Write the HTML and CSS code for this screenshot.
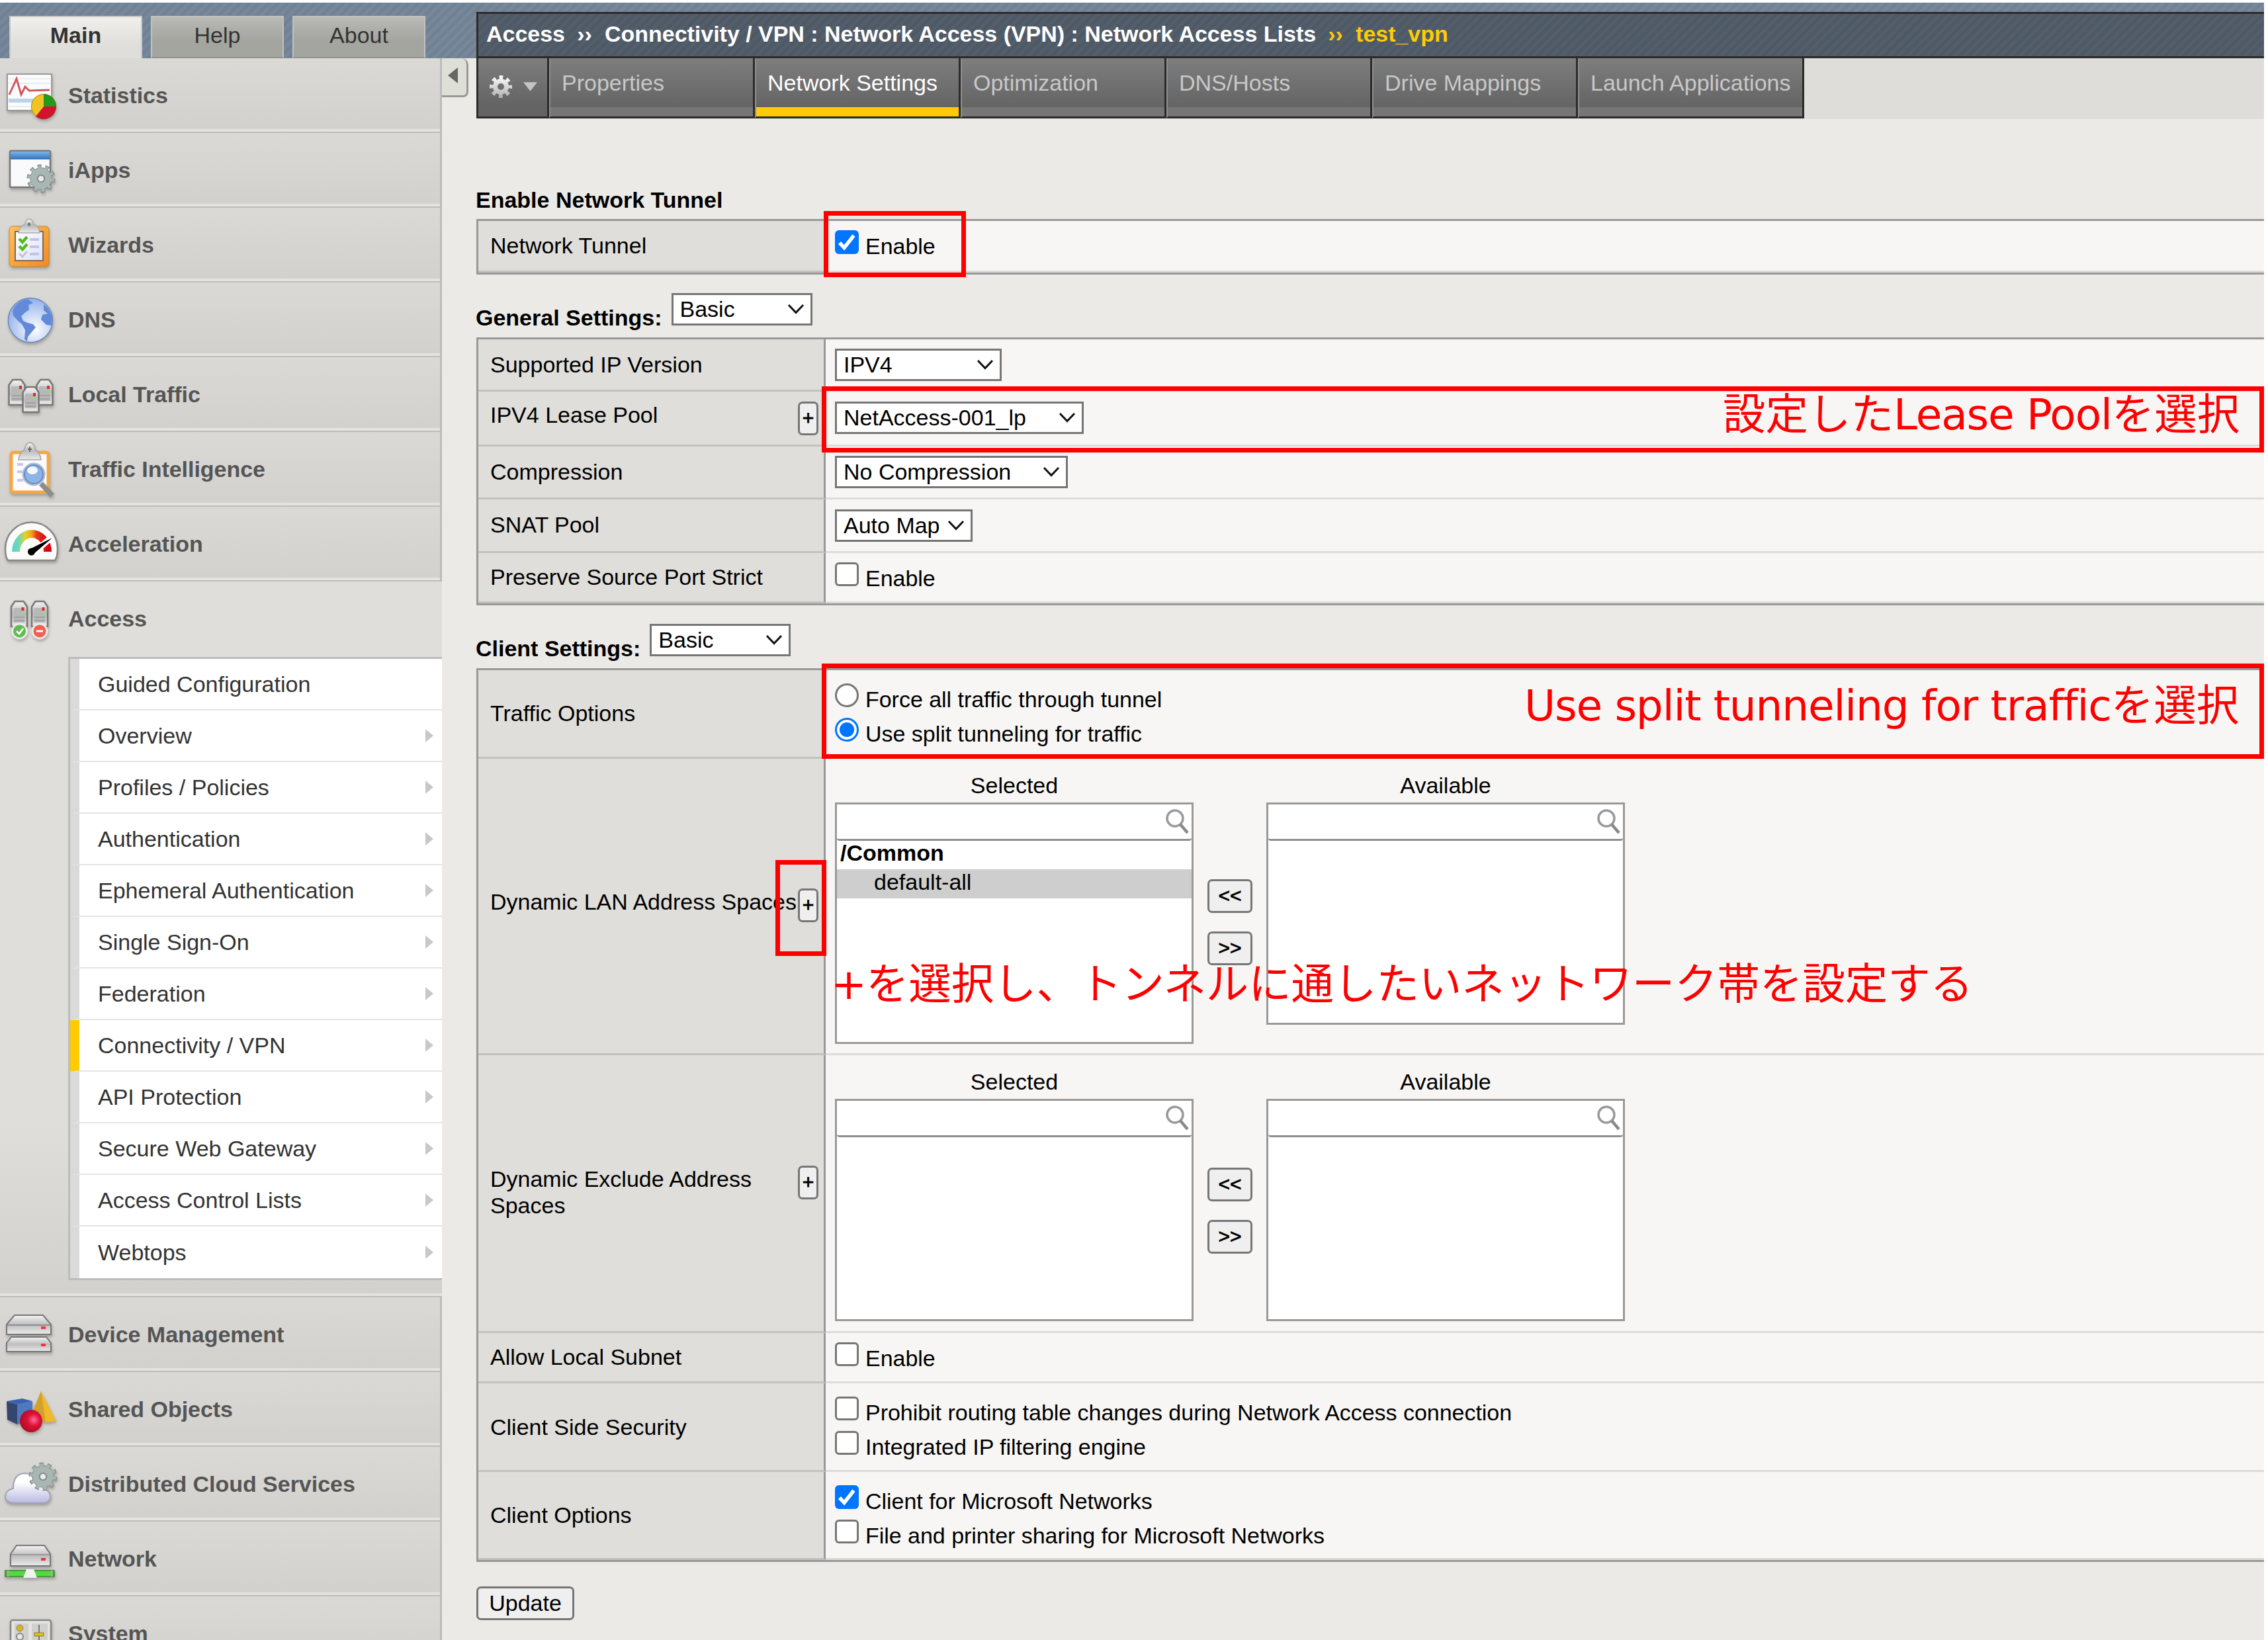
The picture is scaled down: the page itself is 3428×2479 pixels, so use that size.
FILE: index.html
```html
<!DOCTYPE html>
<html lang="en">
<head>
<meta charset="utf-8">
<title>Network Access Lists</title>
<link rel="stylesheet" href="styles.css">
</head>
<body>
<svg class="defs" width="0" height="0" aria-hidden="true">
  <defs>
    <linearGradient id="metal" x1="0" y1="0" x2="0" y2="1"><stop offset="0" stop-color="#f4f4f4"/><stop offset=".5" stop-color="#bdbdbd"/><stop offset="1" stop-color="#ececec"/></linearGradient>
    <linearGradient id="orange" x1="0" y1="0" x2="1" y2="1"><stop offset="0" stop-color="#ffc25c"/><stop offset="1" stop-color="#f08a22"/></linearGradient>
    <linearGradient id="blue" x1="0" y1="0" x2="0" y2="1"><stop offset="0" stop-color="#7db4ec"/><stop offset="1" stop-color="#3372b8"/></linearGradient>
    <linearGradient id="paper" x1="0" y1="0" x2="1" y2="1"><stop offset="0" stop-color="#fff"/><stop offset="1" stop-color="#dfe0fa"/></linearGradient>
    <radialGradient id="globe" cx=".6" cy=".7" r=".7"><stop offset="0" stop-color="#fff"/><stop offset="1" stop-color="#8fb0ea"/></radialGradient>
    <radialGradient id="ball" cx=".62" cy=".45" r=".55"><stop offset="0" stop-color="#ff6a98"/><stop offset=".5" stop-color="#dc1236"/><stop offset="1" stop-color="#b80c26"/></radialGradient>
    <linearGradient id="cloud" x1="0" y1="0" x2="0" y2="1"><stop offset=".3" stop-color="#fff"/><stop offset="1" stop-color="#b9b9e2"/></linearGradient>
    <linearGradient id="arc" x1="0" y1="0" x2="1" y2="0"><stop offset="0" stop-color="#5fd6cc"/><stop offset=".12" stop-color="#7fd6a0"/><stop offset=".3" stop-color="#e8d024"/><stop offset=".5" stop-color="#f0a020"/><stop offset=".65" stop-color="#e63a1a"/><stop offset="1" stop-color="#de0010"/></linearGradient>
    <linearGradient id="shine" gradientUnits="userSpaceOnUse" x1="0" y1="-17" x2="0" y2="17"><stop offset="0" stop-color="#fff"/><stop offset="1" stop-color="#b0b0b0"/></linearGradient>
    <g id="tower">
      <path d="M1.500 10 L7 2 H20 L25.500 10 V40 H1.500 Z" fill="url(#metal)" stroke="#777" stroke-width="2.500" stroke-linejoin="round"/>
      <path d="M5 12 H22 V34 H5 Z" fill="#b8b8b8"/><path d="M5 26 H22 M5 31 H22" stroke="#999" stroke-width="1.500"/>
      <path d="M17 11h4v5h-4z" fill="#e02838"/><path d="M17 17h4v4h-4z" fill="#8fe06a"/>
    </g>
    <g id="cog">
      <circle r="18" fill="none" stroke="#7f8b89" stroke-width="7" stroke-dasharray="5.650 5.660"/>
      <circle r="11" fill="none" stroke="#7f8b89" stroke-width="11.500"/>
      <circle r="17" fill="none" stroke="#a9b7b4" stroke-width="6" stroke-dasharray="4 6.680" stroke-dashoffset="-.4"/>
      <circle r="11" fill="none" stroke="#a9b7b4" stroke-width="9.500"/>
      <circle r="5" fill="#e9eceb" stroke="#7f8b89" stroke-width="1.500"/>
    </g>
    <g id="glass"><circle cx="14" cy="14" r="12" fill="none" stroke="#999" stroke-width="3.500"/><path d="M22 23 L33 36" stroke="#8a8a8a" stroke-width="4.500"/></g>
  </defs>
</svg>

<div class="page">
  <aside class="side">
    <div class="side-tabs"><span class="side-tab on">Main</span><span class="side-tab">Help</span><span class="side-tab">About</span></div>
    <div class="side-body">
      <nav class="menu">
        <div class="item"><svg class="icon" viewBox="0 0 100 113"><rect x="11" y="24" width="67" height="55" fill="#fbfcfd" stroke="#999" stroke-width="2"/><path d="M13 64h50" stroke="#bcd3e8" stroke-width="6"/><path d="M13 31h63M13 38h63M13 73h40" stroke="#e9eef2" stroke-width="2"/><path d="M14 55 L25 31 L32 55 L38 43 L44 49 L75 48" fill="none" stroke="#d5565c" stroke-width="3"/><circle cx="66" cy="73" r="19" fill="#f2c422"/><path d="M66 73V54A19 19 0 0 1 85 73Z" fill="#239a1c"/><path d="M66 73H85A19 19 0 0 1 54 88Z" fill="#d3122e"/><circle cx="66" cy="73" r="18.500" fill="none" stroke="#5a4b1a" stroke-opacity=".5"/></svg>Statistics</div>
        <div class="item"><svg class="icon" viewBox="0 0 100 113"><rect x="15" y="27" width="61" height="55" rx="2" fill="#fafafc" stroke="#777" stroke-width="2.500"/><path d="M16 28h59v12H16z" fill="url(#blue)"/><use href="#cog" x="62" y="69"/></svg>iApps</div>
        <div class="item"><svg class="icon" viewBox="0 0 100 113"><rect x="14" y="28" width="60" height="61" rx="5" fill="url(#orange)" stroke="#c9842e"/><rect x="23" y="36" width="42" height="44" fill="url(#paper)" stroke="#7a6a5a" stroke-width="2"/><path d="M28 38 Q29 27 38 25 Q39 17 44 17 Q49 17 50 25 Q59 27 60 38 Z" fill="url(#metal)" stroke="#aaa" stroke-width="1.500"/><circle cx="44" cy="25" r="2.500" fill="#777"/><path d="M29 47l5 5 7-8M29 58l5 5 7-8" fill="none" stroke="#52bd1c" stroke-width="4.500"/><path d="M29 69l5 5 7-8" fill="none" stroke="#c4c4cc" stroke-width="3"/><path d="M45 48h14M45 59h14M45 70h14" stroke="#c0c4e6" stroke-width="4"/></svg>Wizards</div>
        <div class="item"><svg class="icon" viewBox="0 0 100 113"><circle cx="46" cy="57" r="33.500" fill="url(#globe)" stroke="#6b87bd" stroke-width="1.500"/><path d="M22 37 Q29 27 42 25 L50 31 43 34 44 41 37 46 32 51 35 58 42 61 50 63 54 68 47 76 42 82 41 89 37 86 38 72 33 63 27 58 20 50 19 43Z" fill="#628ad8"/><path d="M66 33 L73 39 79 52 78 65 70 64 62 56 64 49 72 47 66 42Z" fill="#628ad8"/></svg>DNS</div>
        <div class="item"><svg class="icon" viewBox="0 0 100 113"><use href="#tower" x="12" y="32"/><use href="#tower" x="54" y="32"/><use href="#tower" x="33" y="43"/></svg>Local Traffic</div>
        <div class="item"><svg class="icon" viewBox="0 0 100 113"><rect x="17" y="31" width="56" height="60" rx="3" fill="#fafaff" stroke="#f5a646" stroke-width="5"/><path d="M28 42 Q29 31 37 27 Q39 16 45 16 Q51 16 53 27 Q61 31 62 42 Z" fill="url(#metal)" stroke="#a5a5a5" stroke-width="1.500"/><path d="M45 22v8M42 26h6" stroke="#666" stroke-width="2"/><path d="M26 49h9M26 60h8M26 73h9" stroke="#c3c8e8" stroke-width="4"/><path d="M62 78 L79 96" stroke="#8a8f8c" stroke-width="8"/><circle cx="51" cy="64" r="15.500" fill="#8fb3e6" stroke="#b4bcc4" stroke-width="4"/><circle cx="51" cy="64" r="14" fill="none" stroke="#5f8ed0" stroke-width="2"/><ellipse cx="49" cy="58" rx="8" ry="6" fill="#f4f9ff"/></svg>Traffic Intelligence</div>
        <div class="item"><svg class="icon" viewBox="0 0 100 113"><path d="M12 81 Q8 76 8 63 A39.500 39.500 0 0 1 87 63 Q87 76 83 81 Z" fill="#fbfbfa" stroke="#888" stroke-width="2.500"/><path d="M24 68 A24 27 0 0 1 72 68" fill="none" stroke="url(#arc)" stroke-width="12"/><path d="M46 74 L78 46" stroke="#fff" stroke-width="9"/><path d="M43 65 L79 47 L50 72 Z" fill="#000"/><circle cx="47.500" cy="68" r="5.500" fill="#000"/></svg>Acceleration</div>
        <div class="item open"><svg class="icon" viewBox="0 0 100 113"><use href="#tower" x="15.500" y="28"/><use href="#tower" x="46.500" y="28"/><circle cx="29.500" cy="75" r="12.500" fill="#e9ece6"/><circle cx="60" cy="75" r="12.500" fill="#efe8e4"/><circle cx="29.500" cy="75" r="9.500" fill="#63bb55"/><circle cx="60" cy="75" r="9.500" fill="#ec6258"/><path d="M25 75l4 4 6-8" fill="none" stroke="#fff" stroke-width="2.500"/><path d="M55 75h10" stroke="#fff" stroke-width="3"/></svg>Access</div>
        <div class="submenu-wrap">
          <ul class="submenu">
            <li class="leaf">Guided Configuration</li><li>Overview</li><li>Profiles / Policies</li><li>Authentication</li><li>Ephemeral Authentication</li><li>Single Sign-On</li><li>Federation</li><li class="current">Connectivity / VPN</li><li>API Protection</li><li>Secure Web Gateway</li><li>Access Control Lists</li><li>Webtops</li>
          </ul>
        </div>
        <div class="item"><svg class="icon" viewBox="0 0 100 113"><path d="M10 69 L17 60 H70 L77 69 V82 H10Z" fill="url(#metal)" stroke="#777" stroke-width="2"/><path d="M10 41 L22 27 H65 L77 41 V56 H10Z" fill="url(#metal)" stroke="#777" stroke-width="2"/><path d="M11 42h65" stroke="#8e8e8e" stroke-width="2"/><path d="M62 44h7v4h-7zM62 70h7v4h-7z" fill="#f0343c"/></svg>Device Management</div>
        <div class="item"><svg class="icon" viewBox="0 0 100 113"><path d="M10 44 L26 49 V79 L11 72Z" fill="#34456e"/><path d="M10 44 L34 40 49 44 26 49Z" fill="#3a62b0"/><path d="M26 49 L49 44 V72 L26 79Z" fill="#4f78c2"/><path d="M62 29 L85 74 69 76 48 65Z" fill="#f0b92a"/><path d="M62 29 L69 76 46 68Z" fill="#d2a02c"/><circle cx="47" cy="74" r="17" fill="url(#ball)"/></svg>Shared Objects</div>
        <div class="item"><svg class="icon" viewBox="0 0 100 113"><path d="M20 85 Q8 84 8 75 Q9 65 20 63 Q20 41 37 40 Q50 40 54 54 Q66 54 66 64 Q76 66 76 75 Q76 84 66 85Z" fill="url(#cloud)" stroke="#a3a3b4" stroke-width="2"/><use href="#cog" x="65" y="45"/></svg>Distributed Cloud Services</div>
        <div class="item"><svg class="icon" viewBox="0 0 100 113"><path d="M16 49 L25 36 H67 L76 49 V67 H16Z" fill="url(#metal)" stroke="#777" stroke-width="2"/><path d="M17 50h58" stroke="#999" stroke-width="2"/><path d="M62 55h7v4h-7z" fill="#f0343c"/><path d="M7 73h76v11H7z" fill="#4a9a3a"/><path d="M10 75h70v7H10z" fill="#4fdc3c"/><path d="M12 74v9M78 74v9" stroke="#a0b09a" stroke-width="3"/><path d="M35 85 L40 72 H51 L56 85Z" fill="#f3f3f3"/></svg>Network</div>
        <div class="item"><svg class="icon" viewBox="0 0 100 113"><rect x="16" y="36" width="61" height="56" rx="3" fill="#e4e4e2" stroke="#888" stroke-width="2.500"/><path d="M22 41h21v46H22zM48 41h24v46H48z" fill="#d0d0ce"/><circle cx="30" cy="48" r="5" fill="#d8b41e" stroke="#888"/><circle cx="30" cy="61" r="5" fill="#e8e8e8" stroke="#888" stroke-width="2"/><path d="M59 43v40" stroke="#777" stroke-width="2"/><path d="M52 55h14v5H52z" fill="#e0c020" stroke="#887a20"/></svg>System</div>
      </nav>
      <div class="collapse"><svg width="16" height="24" viewBox="0 0 16 24"><path d="M16 0V24L1 12Z" fill="#666"/></svg></div>
    </div>
  </aside>

  <main class="main">
    <div class="crumbs"><span>Access</span><span class="sep">››</span><span>Connectivity / VPN : Network Access (VPN) : Network Access Lists</span><span class="sep gold">››</span><span class="gold">test_vpn</span></div>
    <div class="tabs">
      <div class="gear"><svg width="38" height="38" viewBox="-19 -19 38 38"><circle r="14" fill="none" stroke="url(#shine)" stroke-width="6" stroke-dasharray="5.500 5.500" stroke-dashoffset="2.750"/><circle r="8.500" fill="none" stroke="url(#shine)" stroke-width="7"/></svg><svg width="21" height="14" viewBox="0 0 22 14"><path d="M0 0H22L11 14Z" fill="#c4c4c4"/></svg></div>
      <div class="tab">Properties</div><div class="tab active">Network Settings</div><div class="tab">Optimization</div><div class="tab">DNS/Hosts</div><div class="tab">Drive Mappings</div><div class="tab last">Launch Applications</div>
    </div>

    <div class="heading h-tunnel"><span>Enable Network Tunnel</span></div>
    <section class="table">
      <div class="row r-tunnel"><div class="label">Network Tunnel</div><div class="value"><div class="opt"><span class="box checked"><svg viewBox="0 0 36 36"><path d="M7 19 L14 26.500 L28.500 8" fill="none" stroke="#fff" stroke-width="5.500"/></svg></span>Enable</div></div></div>
    </section>

    <div class="heading h-general"><span>General Settings:</span><div class="select w-basic">Basic<svg class="chev" viewBox="0 0 26 16"><path d="M2 2L13 13.500L24 2"/></svg></div></div>
    <section class="table">
      <div class="row r-ip"><div class="label">Supported IP Version</div><div class="value"><div class="select w-ip">IPV4<svg class="chev" viewBox="0 0 26 16"><path d="M2 2L13 13.500L24 2"/></svg></div></div></div>
      <div class="row r-lease"><div class="label"><span>IPV4 Lease Pool</span><b class="plus">+</b></div><div class="value"><div class="select w-lease">NetAccess-001_lp<svg class="chev" viewBox="0 0 26 16"><path d="M2 2L13 13.500L24 2"/></svg></div></div></div>
      <div class="row r-comp"><div class="label">Compression</div><div class="value"><div class="select w-comp">No Compression<svg class="chev" viewBox="0 0 26 16"><path d="M2 2L13 13.500L24 2"/></svg></div></div></div>
      <div class="row r-snat"><div class="label">SNAT Pool</div><div class="value"><div class="select w-snat">Auto Map<svg class="chev" viewBox="0 0 26 16"><path d="M2 2L13 13.500L24 2"/></svg></div></div></div>
      <div class="row r-port"><div class="label">Preserve Source Port Strict</div><div class="value"><div class="opt"><span class="box"></span>Enable</div></div></div>
    </section>

    <div class="heading h-client"><span>Client Settings:</span><div class="select w-basic">Basic<svg class="chev" viewBox="0 0 26 16"><path d="M2 2L13 13.500L24 2"/></svg></div></div>
    <section class="table">
      <div class="row r-traffic"><div class="label">Traffic Options</div><div class="value"><div class="opt"><span class="box radio"></span>Force all traffic through tunnel</div><div class="opt"><span class="box radio on"></span>Use split tunneling for traffic</div></div></div>
      <div class="row r-lan"><div class="label"><span>Dynamic LAN Address Spaces</span><b class="plus">+</b></div>
        <div class="value transfer">
          <div class="col"><div class="cap">Selected</div><div class="list tall"><div class="search"><svg width="36" height="38"><use href="#glass"/></svg></div><div class="group">/Common</div><div class="entry">default-all</div></div></div>
          <div class="moves"><b class="move">&lt;&lt;</b><b class="move">&gt;&gt;</b></div>
          <div class="col"><div class="cap">Available</div><div class="list"><div class="search"><svg width="36" height="38"><use href="#glass"/></svg></div></div></div>
        </div></div>
      <div class="row r-excl"><div class="label"><span>Dynamic Exclude Address Spaces</span><b class="plus">+</b></div>
        <div class="value transfer">
          <div class="col"><div class="cap">Selected</div><div class="list"><div class="search"><svg width="36" height="38"><use href="#glass"/></svg></div></div></div>
          <div class="moves"><b class="move">&lt;&lt;</b><b class="move">&gt;&gt;</b></div>
          <div class="col"><div class="cap">Available</div><div class="list"><div class="search"><svg width="36" height="38"><use href="#glass"/></svg></div></div></div>
        </div></div>
      <div class="row r-subnet"><div class="label">Allow Local Subnet</div><div class="value"><div class="opt"><span class="box"></span>Enable</div></div></div>
      <div class="row r-sec"><div class="label">Client Side Security</div><div class="value"><div class="opt"><span class="box"></span>Prohibit routing table changes during Network Access connection</div><div class="opt"><span class="box"></span>Integrated IP filtering engine</div></div></div>
      <div class="row r-opts"><div class="label">Client Options</div><div class="value"><div class="opt"><span class="box checked"><svg viewBox="0 0 36 36"><path d="M7 19 L14 26.500 L28.500 8" fill="none" stroke="#fff" stroke-width="5.500"/></svg></span>Client for Microsoft Networks</div><div class="opt"><span class="box"></span>File and printer sharing for Microsoft Networks</div></div></div>
    </section>
    <div class="update">Update</div>
  </main>

  <div class="mark m-tunnel"></div>
  <div class="mark m-lease"></div>
  <div class="mark m-traffic"></div>
  <div class="mark m-plus"></div>
  <div class="note n-lease">設定した<span class="lat">Lease Pool</span>を選択</div>
  <div class="note n-traffic"><span class="lat">Use split tunneling for traffic</span>を選択</div>
  <div class="note n-plus"><span class="lat">+</span>を選択し、トンネルに通したいネットワーク帯を設定する</div>
</div>
</body>
</html>
```
FILE: styles.css
```css
* { box-sizing: border-box; }
body { margin: 0; background: #fff; color: #111; font: 34px/40px "Liberation Sans", Arial, sans-serif; }
.defs { position: absolute; }
.page {
  position: relative; display: grid; grid-template-columns: 720px 1fr;
  width: 3422px; height: 2475px; margin-top: 4px; overflow: hidden;
  background:
    repeating-linear-gradient(135deg, rgba(255,255,255,.035) 0 5px, rgba(0,0,0,.02) 5px 10px) 0 0 / 100% 84px no-repeat,
    linear-gradient(#738497, #738497) 0 0 / 100% 84px no-repeat,
    #ebeae6;
}

/* sidebar */
.side-tabs { display: flex; gap: 13px; height: 84px; padding: 20px 0 0 14px; }
.side-tab {
  width: 201px; height: 64px; padding-top: 7px; text-align: center; line-height: 40px; color: #333;
  border: 2px solid #c2c2be; border-bottom-color: #8f908c; background: linear-gradient(#b9b9b5, #a4a59f 60%);
}
.side-tab.on { font-weight: bold; border-color: #c9c9c6; border-bottom: 0; background: linear-gradient(#f0efed, #dfdeda 70%); }
.side-body { display: flex; align-items: flex-start; }
.menu { width: 668px; }
.item {
  display: flex; height: 113px; padding-top: 36px; font-weight: bold; color: #555; letter-spacing: -.03px;
  border-right: 3px solid #bcbcbc; border-bottom: 2px solid #bcbdbb;
  background: linear-gradient(#dad9d5, #d2d1cd 107px, #e4e3e0 107px, #e4e3e0);
}
.item.open { border: 0; background: #dfdeda; }
.icon { flex: none; width: 100px; height: 113px; margin: -36px 3px 0 0; filter: drop-shadow(1px 3px 2px rgba(0,0,0,.25)); }
.submenu-wrap {
  height: 969px; padding: 1px 0 0 103px; border-bottom: 2px solid #bcbdbb;
  background: linear-gradient(#dfdeda, #dfdeda 700px, #d2d1cd 963px, #e4e3e0 963px);
}
.submenu { margin: 0; padding: 0; list-style: none; border: 3px solid #bcbcbc; border-right: 0; }
.submenu li {
  display: flex; justify-content: space-between; align-items: center; height: 78px; padding: 0 13px 1px 28px;
  color: #333; background: #fff; border-left: 14px solid #dadada; border-bottom: 2px solid #e4e4e4;
}
.submenu li:last-child { border-bottom: 0; }
.submenu li::after { content: ""; border: 8px solid transparent; border-width: 10px 0 10px 12px; border-left-color: #c8c8c8; }
.submenu li.leaf::after { display: none; }
.submenu li.current { border-left-color: #ffcb05; }
.collapse {
  display: flex; align-items: center; justify-content: center; width: 40px; height: 59px; padding: 0 5px 4px 0;
  border: 2px solid #999; border-width: 0 3px 3px 0; border-radius: 0 10px 8px 0; background: #dedfd6;
}

/* title bar and tabs */
.main { min-width: 0; }
.crumbs {
  display: flex; height: 70px; margin-top: 14px; padding: 10px 12px; color: #fff; font-weight: bold; white-space: pre; letter-spacing: -.02px;
  border: 3px solid #2b2b2b; border-right: 0;
  background: repeating-linear-gradient(135deg, #545e6b 0 5px, #4e5966 5px 10px);
}
.sep { width: 60px; padding-right: 1px; text-align: center; }
.gold { color: #ffcb05; }
.tabs { display: flex; height: 92px; background: #deddda; }
.gear, .tab { height: 91px; border: solid #2b2b2b; border-width: 0 3px 3px 0; background: linear-gradient(#7e7e7e, #646464 70px); }
.gear { display: flex; align-items: center; gap: 15px; width: 110px; padding: 0 0 2px 15px; border-left-width: 3px; }
.tab {
  width: 311px; padding: 17px 0 0 17px; color: #c8c8c8; white-space: nowrap;
  border-left: 2px solid #8f8f8f;
  background: linear-gradient(#7e7e7e, #646464 74px, #767676 74px);
}
.tab.active { color: #fff; background: linear-gradient(#7e7e7e, #646464 74px, #ffcb05 74px); }
.tab.last { width: 342px; }

/* settings tables */
.heading { display: flex; font-weight: bold; color: #000; }
.heading > span { margin-left: -1px; }
.heading .select { font-weight: normal; }
.h-tunnel { height: 151px; padding-top: 102px; }
.h-general { height: 95px; gap: 14px; padding-top: 28px; }
.h-general > span, .h-client > span { padding-top: 17px; }
.h-client { height: 95px; gap: 14px; padding-top: 28px; }
.table { border: 3px solid #999; border-right: 0; color: #000; }
.row { display: grid; grid-template-columns: 525px 1fr; }
.label { display: flex; justify-content: space-between; align-items: flex-start; padding-left: 18px; border-right: 3px solid #999; border-bottom: 3px solid #c3c2be; background: #dfdeda; white-space: nowrap; }
.value { padding-left: 14px; border-bottom: 3px solid #dcdcda; background: #f7f6f4; }
.opt { display: flex; height: 52px; gap: 10px; padding-top: 4px; white-space: nowrap; letter-spacing: -.03px; }
.box { width: 36px; height: 36px; margin-top: -4px; border: 3px solid #767676; border-radius: 6px; background: #fff; }
.box.checked { border: 0; background: #0075ff; }
.box svg { display: block; }
.box.radio { border-radius: 50%; }
.box.radio.on { border-color: #0075ff; background: radial-gradient(circle, #0075ff 10.500px, #fff 11.500px); }
.select {
  display: flex; justify-content: space-between; align-items: center; height: 49px; padding: 0 9px 1px 10px;
  color: #000; background: #fff; border: 3px solid #767676; white-space: nowrap;
}
.chev { width: 26px; height: 16px; fill: none; stroke: #111; stroke-width: 3; }
.w-basic { width: 213px; }
.w-ip { width: 252px; }
.w-lease { width: 376px; }
.w-comp { width: 352px; }
.w-snat { width: 208px; }
.plus, .move, .update {
  display: flex; justify-content: center; align-items: center; padding-bottom: 2px; font-weight: normal; color: #000;
  background: #efefef; border: 3px solid #767676; border-radius: 7px;
}
.plus, .move { font-size: 30px; -webkit-text-stroke: .8px #000; }
.plus { flex: none; width: 31px; height: 51px; margin-right: 8px; }

.r-tunnel { height: 78px; }
.r-tunnel .label { padding-top: 17px; }
.r-tunnel .value { padding-top: 14px; }
.r-ip { height: 79px; }
.r-ip .label { padding-top: 18px; }
.r-ip .value { padding-top: 14px; }
.r-lease { height: 83px; }
.r-lease .label, .r-lease .value { padding-top: 15px; }
.r-comp { height: 80px; }
.r-comp .label { padding-top: 18px; }
.r-comp .value { padding-top: 14px; }
.r-snat { height: 81px; }
.r-snat .label { padding-top: 18px; }
.r-snat .value { padding-top: 15px; }
.r-port { height: 76px; }
.r-port .label { padding-top: 16px; }
.r-port .value { padding-top: 14px; }
.r-traffic { height: 134px; }
.r-traffic .label { padding-top: 45px; }
.r-traffic .value { padding-top: 20px; }
.r-lan { height: 448px; }
.r-lan .label { padding-top: 196px; }
.r-excl { height: 420px; }
.r-excl .label { padding-top: 167px; }
.r-excl .label span { width: 410px; white-space: normal; }
.r-subnet { height: 76px; }
.r-subnet .label { padding-top: 16px; }
.r-subnet .value { padding-top: 14px; }
.r-sec { height: 134px; }
.r-sec .label { padding-top: 46px; }
.r-sec .value { padding-top: 20px; }
.r-opts { height: 133px; }
.r-opts .label { padding-top: 45px; }
.r-opts .value { padding-top: 20px; }

/* list transfer control */
.transfer { display: flex; align-items: flex-start; padding-top: 20px; }
.col { width: 542px; text-align: center; }
.cap { height: 46px; }
.list { height: 336px; border: 3px solid #999; background: #fff; text-align: left; }
.list.tall { height: 365px; }
.search { display: flex; justify-content: flex-end; height: 55px; padding: 7px 3px 0 0; border-bottom: 3px solid #8f8f8f; border-radius: 0 0 4px 4px; }
.group { height: 43px; padding-left: 5px; font-weight: bold; line-height: 36px; }
.entry { height: 44px; padding-left: 56px; background: #cecece; line-height: 38px; }
.moves { display: flex; flex-direction: column; align-items: center; gap: 28px; width: 110px; padding-top: 162px; }
.r-excl .moves { padding-top: 150px; }
.move { width: 68px; height: 51px; }
.update { width: 148px; height: 51px; margin-top: 37px; }

/* annotations laid over the form */
.mark { position: absolute; border: 7px solid #f00; }
.m-tunnel { left: 1245px; top: 315px; width: 215px; height: 100px; }
.m-lease { left: 1242px; top: 580px; width: 2180px; height: 100px; }
.m-traffic { left: 1242px; top: 999px; width: 2180px; height: 144px; }
.m-plus { left: 1172px; top: 1296px; width: 77px; height: 145px; }
.note { position: absolute; color: #f00; font: 64.500px/80px "Noto Sans CJK JP", sans-serif; white-space: nowrap; }
.lat { font-family: "DejaVu Sans", sans-serif; letter-spacing: -1.150px; }
.n-lease { left: 2604px; top: 577px; }
.n-traffic { left: 2304px; top: 1017px; }
.n-plus { left: 1256px; top: 1438px; letter-spacing: -.1px; }
```
